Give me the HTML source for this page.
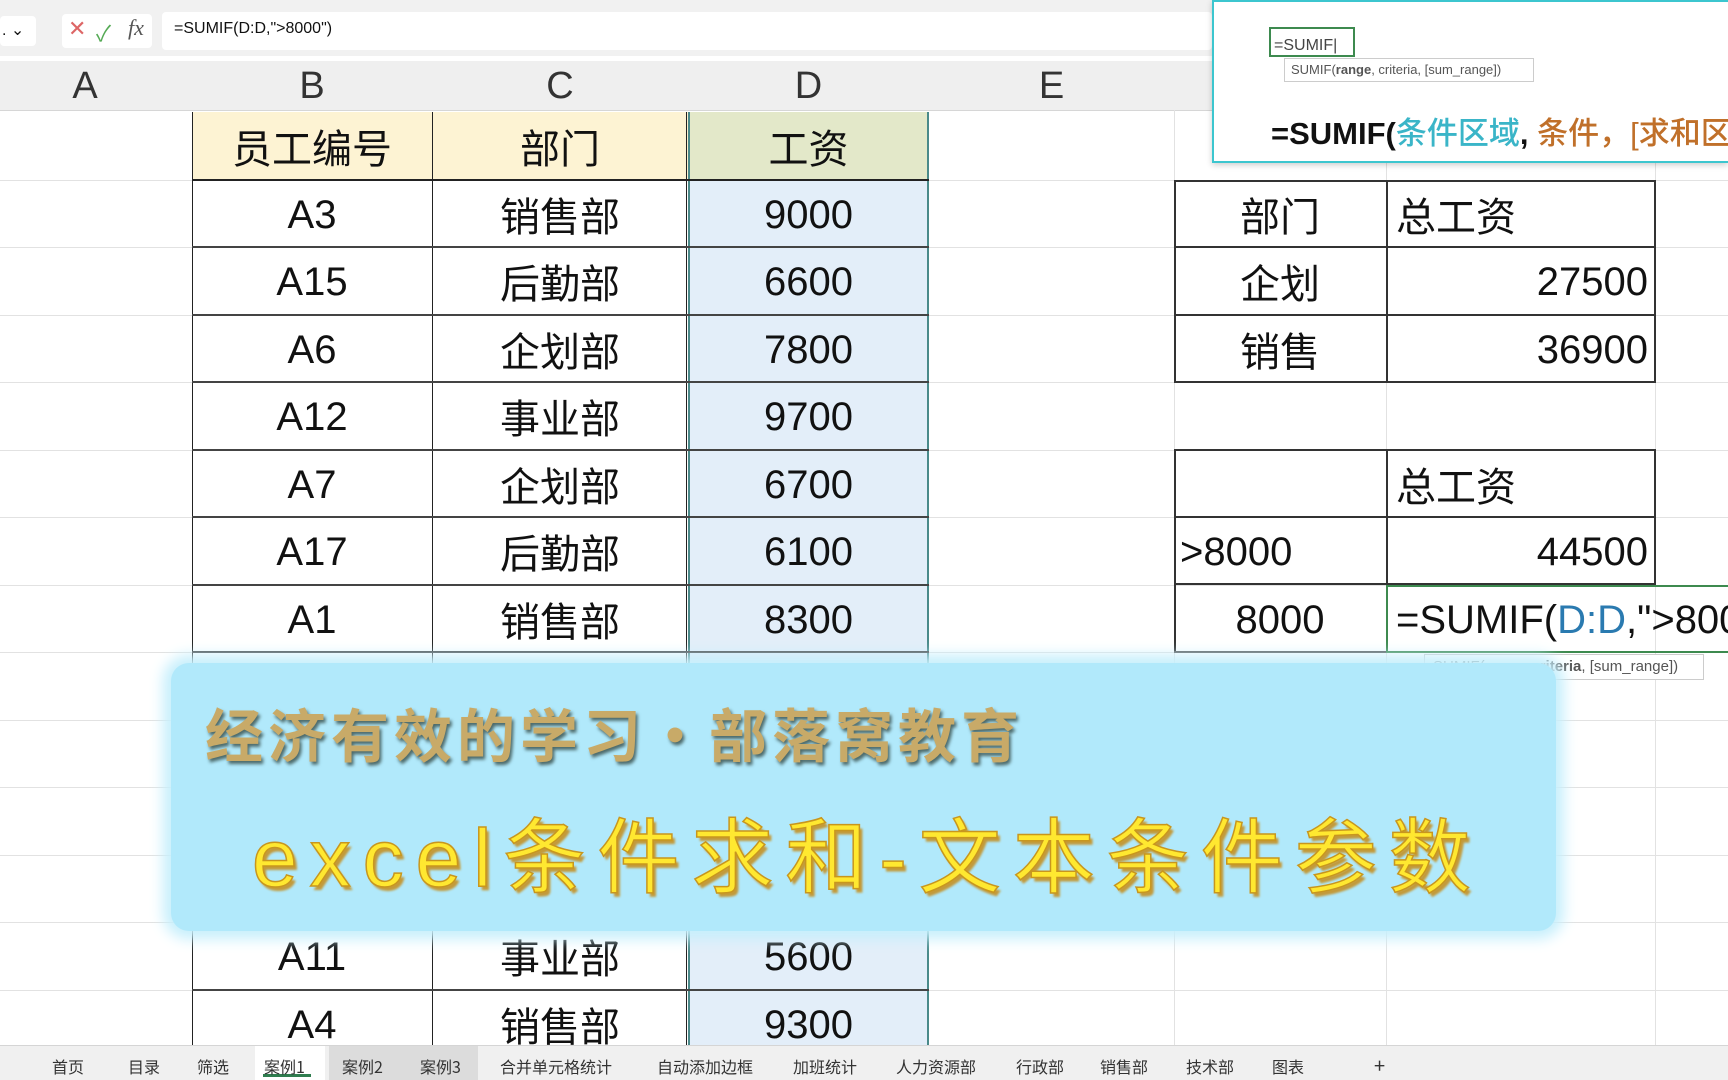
<!DOCTYPE html>
<html><head><meta charset="utf-8"><style>
*{margin:0;padding:0;box-sizing:border-box}
body{width:1728px;height:1080px;overflow:hidden;background:#fff;position:relative;font-family:"Liberation Sans","Noto Sans CJK SC",sans-serif;color:#111}
.a{position:absolute}
.c{position:absolute;display:flex;align-items:center;justify-content:center;font-size:40px;height:67px}
.hl{position:absolute;height:1px;background:#e2e2e2;left:0;width:1728px}
.vl{position:absolute;width:1px;background:#e2e2e2;top:110px;height:935px}
.col{position:absolute;top:61px;height:50px;display:flex;align-items:center;justify-content:center;font-size:38px;color:#333;font-weight:300}
.tab{position:absolute;top:1054px;font-size:16px;color:#333;font-family:"Noto Sans CJK SC",sans-serif}
</style></head><body>
<div class="a" style="left:0;top:0;width:1728px;height:56px;background:#f1f1f1"></div>
<div class="a" style="left:0;top:16px;width:36px;height:30px;background:#fff;border-radius:4px;font-size:16px;padding:4px 2px">. ⌄</div>
<div class="a" style="left:62px;top:14px;width:90px;height:34px;background:#fff;border-radius:4px;font-size:22px"><span style="color:#d66;position:absolute;left:6px;top:2px">✕</span><span style="color:#5a5;position:absolute;left:34px;top:2px">✓</span><span style="position:absolute;left:66px;top:1px;font-style:italic;font-family:'Liberation Serif';color:#555">fx</span></div>
<div class="a" style="left:162px;top:12px;width:1050px;height:38px;background:#fff;border-radius:4px;font-size:16px;padding:8px 12px">=SUMIF(D:D,"&gt;8000")</div>
<div class="a" style="left:0;top:61px;width:1728px;height:50px;background:#efefef;border-bottom:1px solid #d6d6d6"></div>
<div class="col" style="left:0;width:170px">A</div>
<div class="col" style="left:192px;width:240px">B</div>
<div class="col" style="left:432px;width:256px">C</div>
<div class="col" style="left:688px;width:241px">D</div>
<div class="col" style="left:929px;width:245px">E</div>
<div class="vl" style="left:1174px"></div><div class="vl" style="left:1386px"></div><div class="vl" style="left:1655px"></div>
<div class="hl" style="top:180px"></div><div class="hl" style="top:247px"></div><div class="hl" style="top:315px"></div><div class="hl" style="top:382px"></div><div class="hl" style="top:450px"></div><div class="hl" style="top:517px"></div><div class="hl" style="top:585px"></div><div class="hl" style="top:652px"></div><div class="hl" style="top:720px"></div><div class="hl" style="top:787px"></div><div class="hl" style="top:855px"></div><div class="hl" style="top:922px"></div><div class="hl" style="top:990px"></div>
<div class="a" style="left:192px;top:112px;width:496px;height:68px;background:#fdf3d3"></div>
<div class="a" style="left:688px;top:112px;width:241px;height:68px;background:#e3e8c9"></div>
<div class="a" style="left:688px;top:180px;width:241px;height:865px;background:#e3eef9"></div>
<div class="a" style="left:688px;top:112px;width:2px;height:933px;background:#4a8a8a"></div>
<div class="a" style="left:927px;top:112px;width:2px;height:933px;background:#4a8a8a"></div>
<div class="a" style="left:192px;top:112px;width:1px;height:933px;background:#222"></div>
<div class="a" style="left:432px;top:112px;width:1px;height:933px;background:#222"></div>
<div class="a" style="left:686px;top:112px;width:1px;height:933px;background:#222"></div>
<div class="a" style="left:192px;top:179px;width:737px;height:2px;background:#222"></div>
<div class="a" style="left:192px;top:246px;width:737px;height:2px;background:#444"></div>
<div class="a" style="left:192px;top:314px;width:737px;height:2px;background:#444"></div>
<div class="a" style="left:192px;top:381px;width:737px;height:2px;background:#444"></div>
<div class="a" style="left:192px;top:449px;width:737px;height:2px;background:#444"></div>
<div class="a" style="left:192px;top:516px;width:737px;height:2px;background:#444"></div>
<div class="a" style="left:192px;top:584px;width:737px;height:2px;background:#444"></div>
<div class="a" style="left:192px;top:651px;width:737px;height:2px;background:#444"></div>
<div class="a" style="left:192px;top:989px;width:737px;height:2px;background:#444"></div>

<div class="c" style="left:192px;top:112px;width:240px">员工编号</div><div class="c" style="left:432px;top:112px;width:256px">部门</div><div class="c" style="left:688px;top:112px;width:241px">工资</div>
<div class="c" style="left:192px;top:182px;width:240px">A3</div><div class="c" style="left:432px;top:180px;width:256px">销售部</div><div class="c" style="left:688px;top:182px;width:241px">9000</div>
<div class="c" style="left:192px;top:249px;width:240px">A15</div><div class="c" style="left:432px;top:247px;width:256px">后勤部</div><div class="c" style="left:688px;top:249px;width:241px">6600</div>
<div class="c" style="left:192px;top:317px;width:240px">A6</div><div class="c" style="left:432px;top:315px;width:256px">企划部</div><div class="c" style="left:688px;top:317px;width:241px">7800</div>
<div class="c" style="left:192px;top:384px;width:240px">A12</div><div class="c" style="left:432px;top:382px;width:256px">事业部</div><div class="c" style="left:688px;top:384px;width:241px">9700</div>
<div class="c" style="left:192px;top:452px;width:240px">A7</div><div class="c" style="left:432px;top:450px;width:256px">企划部</div><div class="c" style="left:688px;top:452px;width:241px">6700</div>
<div class="c" style="left:192px;top:519px;width:240px">A17</div><div class="c" style="left:432px;top:517px;width:256px">后勤部</div><div class="c" style="left:688px;top:519px;width:241px">6100</div>
<div class="c" style="left:192px;top:587px;width:240px">A1</div><div class="c" style="left:432px;top:585px;width:256px">销售部</div><div class="c" style="left:688px;top:587px;width:241px">8300</div>
<div class="c" style="left:192px;top:924px;width:240px">A11</div><div class="c" style="left:432px;top:922px;width:256px">事业部</div><div class="c" style="left:688px;top:924px;width:241px">5600</div>
<div class="c" style="left:192px;top:992px;width:240px">A4</div><div class="c" style="left:432px;top:990px;width:256px">销售部</div><div class="c" style="left:688px;top:992px;width:241px">9300</div>

<div class="a" style="left:1174px;top:180px;width:482px;height:203px;border:2px solid #333"></div>
<div class="a" style="left:1386px;top:180px;width:2px;height:203px;background:#333"></div>
<div class="a" style="left:1174px;top:246px;width:482px;height:2px;background:#333"></div>
<div class="a" style="left:1174px;top:314px;width:482px;height:2px;background:#333"></div>
<div class="c" style="left:1174px;top:180px;width:212px">部门</div><div class="c" style="left:1396px;top:180px;justify-content:flex-start">总工资</div>
<div class="c" style="left:1174px;top:247px;width:212px">企划</div><div class="c" style="left:1386px;top:249px;width:262px;justify-content:flex-end">27500</div>
<div class="c" style="left:1174px;top:315px;width:212px">销售</div><div class="c" style="left:1386px;top:317px;width:262px;justify-content:flex-end">36900</div>
<div class="a" style="left:1174px;top:449px;width:482px;height:136px;border:2px solid #333"></div>
<div class="a" style="left:1386px;top:449px;width:2px;height:136px;background:#333"></div>
<div class="a" style="left:1174px;top:516px;width:482px;height:2px;background:#333"></div>
<div class="a" style="left:1174px;top:585px;width:2px;height:68px;background:#333"></div>
<div class="a" style="left:1174px;top:651px;width:212px;height:2px;background:#555"></div>
<div class="a" style="left:1386px;top:585px;width:342px;height:68px;border:2px solid #3d8a4f;border-right:none"></div>
<div class="c" style="left:1396px;top:450px;justify-content:flex-start">总工资</div>
<div class="c" style="left:1180px;top:519px;justify-content:flex-start">&gt;8000</div><div class="c" style="left:1386px;top:519px;width:262px;justify-content:flex-end">44500</div>
<div class="c" style="left:1174px;top:587px;width:212px">8000</div>
<div class="c" style="left:1396px;top:587px;justify-content:flex-start;white-space:nowrap">=SUMIF(<span style="color:#2a7ab0">D:D</span>,"&gt;8000</div>
<div class="a" style="left:1424px;top:654px;width:280px;height:26px;border:1px solid #ccc;background:#fff;font-size:15px;color:#555;padding:3px 8px;white-space:nowrap">SUMIF(range, <b>criteria</b>, [sum_range])</div>

<div class="a" style="left:1212px;top:0;width:516px;height:163px;background:#fff;border:2px solid #3cc6cf;border-right:none;box-shadow:0 2px 6px rgba(0,0,0,.2)">
<div class="a" style="left:55px;top:25px;width:86px;height:30px;border:2px solid #3d8a4f;font-size:16px;padding:8px 3px;color:#444">=SUMIF|</div>
<div class="a" style="left:70px;top:56px;width:250px;height:24px;border:1px solid #ccc;font-size:13px;color:#555;padding:3px 6px;white-space:nowrap">SUMIF(<b>range</b>, criteria, [sum_range])</div>
<div class="a" style="left:57px;top:106px;font-size:31px;font-weight:bold;white-space:nowrap;font-family:'Liberation Sans','Noto Sans CJK SC',sans-serif">=SUMIF(<span style="color:#3ab5c8;font-weight:500">条件区域</span>, <span style="color:#c0702a;font-weight:500">条件，[求和区域]</span></div>
</div>

<div class="a" style="left:171px;top:663px;width:1385px;height:268px;background:#b1e9fb;border-radius:18px;box-shadow:0 0 14px 8px #c6effc"></div>
<div class="a" style="left:205px;top:690px;font-size:58px;font-weight:bold;color:#c8aa68;letter-spacing:5px;white-space:nowrap;font-family:'Noto Sans CJK SC',sans-serif;text-shadow:2px 3px 3px #4d6a6a">经济有效的学习・部落窝教育</div>
<div class="a" style="left:252px;top:818px;font-size:82px;color:#ffe830;white-space:nowrap;font-family:'Liberation Sans','Noto Sans CJK SC',sans-serif;letter-spacing:12px;-webkit-text-stroke:1.5px #c8961e;text-shadow:3px 4px 2px #c39a3a;line-height:1">excel条件求和-文本条件参数</div>

<div class="a" style="left:0;top:1045px;width:1728px;height:35px;background:#f0f0f0;border-top:1px solid #d5d5d5"></div>
<div class="a" style="left:329px;top:1046px;width:149px;height:34px;background:#dcdcdc"></div>
<div class="a" style="left:255px;top:1046px;width:70px;height:34px;background:#fff"></div>
<div class="a" style="left:263px;top:1074px;width:48px;height:3px;background:#2f7d4f"></div>
<div class="tab" style="left:52px">首页</div><div class="tab" style="left:128px">目录</div><div class="tab" style="left:197px">筛选</div><div class="tab" style="left:264px">案例1</div><div class="tab" style="left:342px">案例2</div><div class="tab" style="left:420px">案例3</div><div class="tab" style="left:500px">合并单元格统计</div><div class="tab" style="left:657px">自动添加边框</div><div class="tab" style="left:793px">加班统计</div><div class="tab" style="left:896px">人力资源部</div><div class="tab" style="left:1016px">行政部</div><div class="tab" style="left:1100px">销售部</div><div class="tab" style="left:1186px">技术部</div><div class="tab" style="left:1272px">图表</div><div class="tab" style="left:1374px;font-size:20px;top:1050px">+</div>
</body></html>
